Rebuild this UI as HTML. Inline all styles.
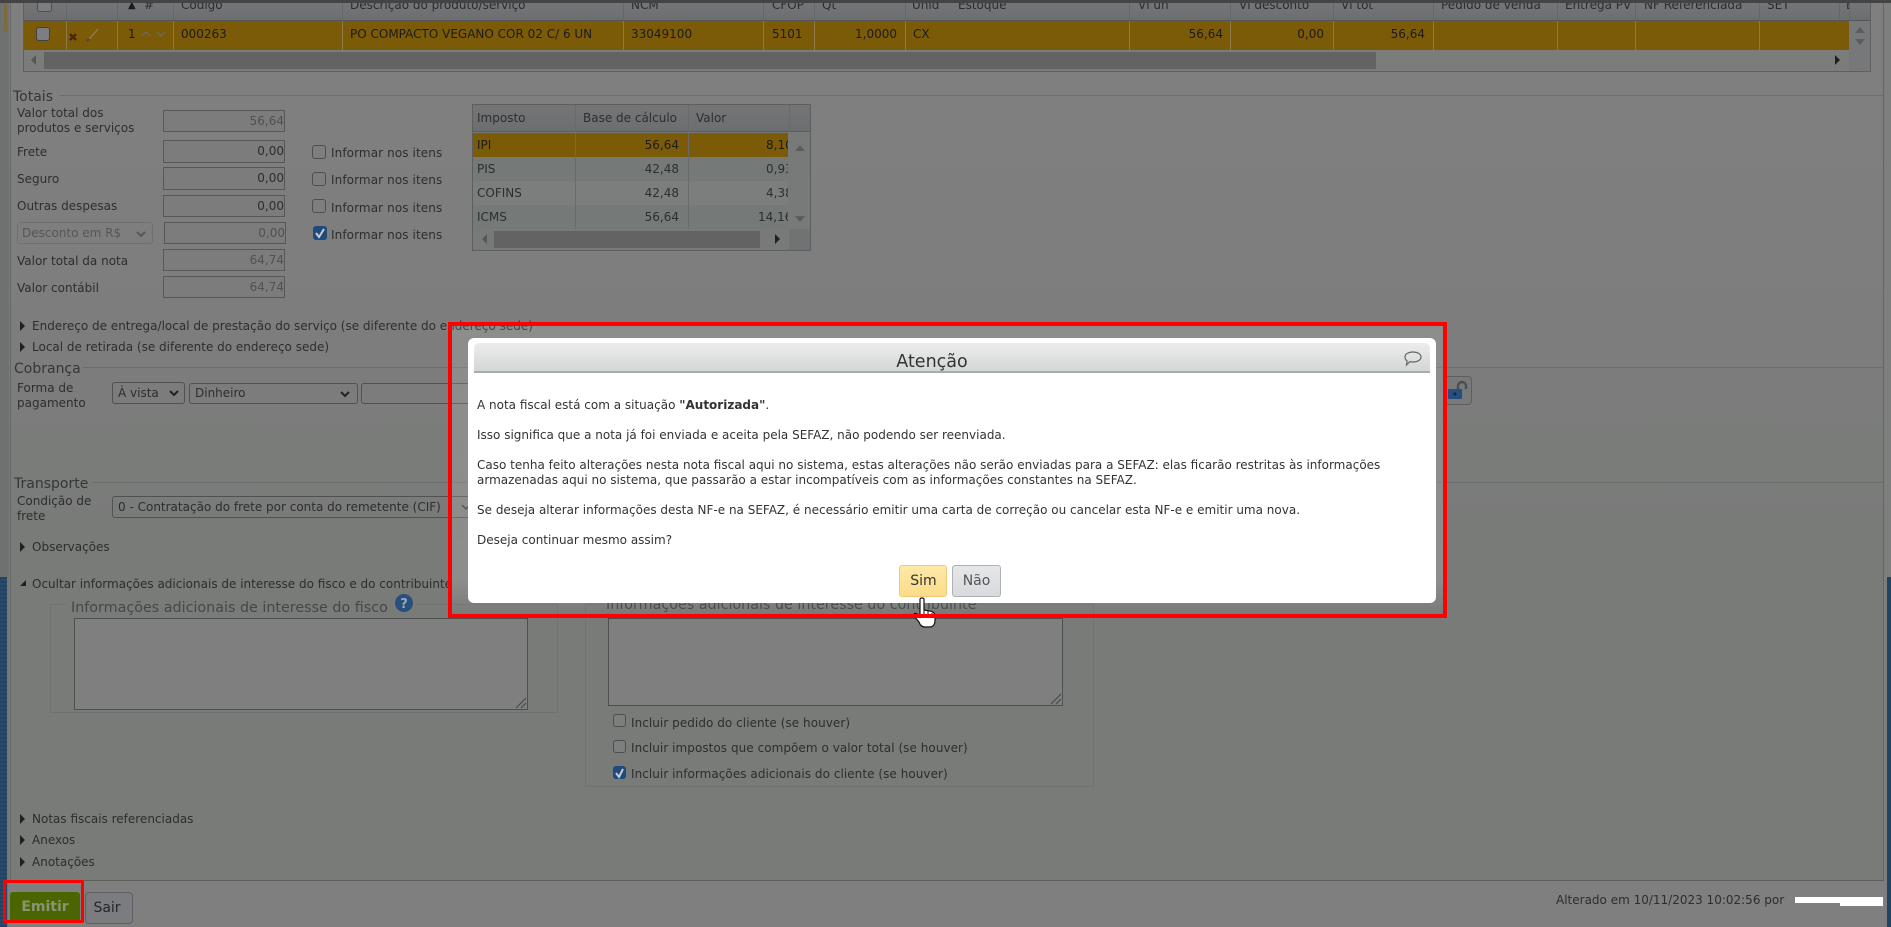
<!DOCTYPE html>
<html lang="pt-BR"><head><meta charset="utf-8"><title>Nota fiscal</title>
<style>
html,body{margin:0;padding:0}
body{width:1891px;height:927px;overflow:hidden;position:relative;background:#7b7c7b;font-family:"DejaVu Sans",Verdana,sans-serif;font-size:12px;color:#2c2e2f}
div{position:absolute;box-sizing:border-box}
.t{position:absolute;white-space:nowrap;line-height:14px;height:14px}
.lg{position:absolute;white-space:nowrap;font-size:14px;line-height:18px;color:#333738}
.hl{position:absolute;height:1px;background:#6c6e6e}
.vs{position:absolute;width:1px;background:#646668}
.gc{position:absolute;width:1px;background:#8d7a45}
.box{border:1px solid #565858;background:#7b7c7b;text-align:right;line-height:20px;padding-right:0;white-space:nowrap;overflow:hidden}
.cb{position:absolute;width:14px;height:14px;border:1px solid #4c4e50;border-radius:3px;background:#7d7f7f}
.cb.on{background:#1f4a7c;border-color:#1f4a7c;color:#c8cdd2}
.arr{position:absolute;width:0;height:0;border-top:5px solid transparent;border-bottom:5px solid transparent;border-left:5px solid #202020}
.hd{position:absolute;top:-2px;font-size:12px;line-height:14px;white-space:nowrap;color:#2a2c2e}
</style></head><body>

<!-- frame -->
<div style="left:0;top:3px;width:9px;height:574px;background:#6f7070"></div>
<div style="left:4px;top:3px;width:3px;height:28px;background:#7d6a3f"></div>
<div style="left:0;top:577px;width:9px;height:350px;background:#747575"></div>
<div style="left:0;top:577px;width:7px;height:350px;background:repeating-linear-gradient(0deg,#234363 0 2px,#2b4a6a 2px 4px)"></div>
<div style="left:1884px;top:3px;width:7px;height:924px;background:#7d7e7e"></div>
<div style="left:1887px;top:577px;width:4px;height:350px;background:#234363"></div>
<div style="left:10px;top:3px;width:1px;height:877px;background:#666868"></div>
<div style="left:1883px;top:3px;width:1px;height:877px;background:#646666"></div>
<div style="left:11px;top:3px;width:1872px;height:877px;background:linear-gradient(#7f7f7f,#7f7f7f 15%,#797b79 60%,#797b79)"></div>
<div style="left:10px;top:880px;width:1874px;height:1px;background:#5c5e5e"></div>
<div style="left:8px;top:881px;width:1876px;height:46px;background:#7f7f7f"></div>

<!-- product table -->
<div style="left:23px;top:3px;width:1848px;height:69px;border:1px solid #5e6062;border-top:0;background:#7b7d7b"></div>
<div style="left:24px;top:3px;width:1846px;height:17px;background:linear-gradient(#747577,#6c6e70)"></div>
<div style="left:24px;top:20px;width:1846px;height:1px;background:#55575a"></div>
<div style="left:24px;top:21px;width:1825px;height:29px;background:#7c5b08"></div>
<div style="left:37px;top:3px;width:15px;height:9px;border:1px solid #4d4f52;border-top:0;border-radius:0 0 3px 3px;background:#7b7d80"></div>
<span class="hd" style="left:128px;top:-1px;font-size:10px;color:#1a1a1a">▲</span><span class="hd" style="left:144px">#</span>
<span class="hd" style="left:181px">Código</span><span class="hd" style="left:350px">Descrição do produto/serviço</span><span class="hd" style="left:631px">NCM</span><span class="hd" style="left:772px">CFOP</span><span class="hd" style="left:822px">Qt</span><span class="hd" style="left:912px">Unid</span><span class="hd" style="left:958px">Estoque</span><span class="hd" style="left:1138px">Vl un</span><span class="hd" style="left:1239px">Vl desconto</span><span class="hd" style="left:1341px">Vl tot</span><span class="hd" style="left:1441px">Pedido de venda</span><span class="hd" style="left:1565px">Entrega PV</span><span class="hd" style="left:1644px">NF Referenciada</span><span class="hd" style="left:1767px">SET</span>
<div style="left:1846px;top:-2px;width:3px;height:14px;overflow:hidden;line-height:14px">E</div>
<div class="vs" style="left:66px;top:3px;height:17px"></div><div class="vs" style="left:117px;top:3px;height:17px"></div><div class="vs" style="left:173px;top:3px;height:17px"></div><div class="vs" style="left:342px;top:3px;height:17px"></div><div class="vs" style="left:623px;top:3px;height:17px"></div><div class="vs" style="left:763px;top:3px;height:17px"></div><div class="vs" style="left:814px;top:3px;height:17px"></div><div class="vs" style="left:905px;top:3px;height:17px"></div><div class="vs" style="left:1129px;top:3px;height:17px"></div><div class="vs" style="left:1230px;top:3px;height:17px"></div><div class="vs" style="left:1333px;top:3px;height:17px"></div><div class="vs" style="left:1433px;top:3px;height:17px"></div><div class="vs" style="left:1557px;top:3px;height:17px"></div><div class="vs" style="left:1635px;top:3px;height:17px"></div><div class="vs" style="left:1759px;top:3px;height:17px"></div><div class="vs" style="left:1839px;top:3px;height:17px"></div><div class="vs" style="left:1849px;top:3px;height:17px"></div>
<div class="gc" style="left:66px;top:21px;height:29px"></div><div class="gc" style="left:117px;top:21px;height:29px"></div><div class="gc" style="left:173px;top:21px;height:29px"></div><div class="gc" style="left:342px;top:21px;height:29px"></div><div class="gc" style="left:623px;top:21px;height:29px"></div><div class="gc" style="left:763px;top:21px;height:29px"></div><div class="gc" style="left:814px;top:21px;height:29px"></div><div class="gc" style="left:905px;top:21px;height:29px"></div><div class="gc" style="left:1129px;top:21px;height:29px"></div><div class="gc" style="left:1230px;top:21px;height:29px"></div><div class="gc" style="left:1333px;top:21px;height:29px"></div><div class="gc" style="left:1433px;top:21px;height:29px"></div><div class="gc" style="left:1557px;top:21px;height:29px"></div><div class="gc" style="left:1635px;top:21px;height:29px"></div><div class="gc" style="left:1759px;top:21px;height:29px"></div>
<div class="cb" style="left:36px;top:27px;background:#7c7e80;border:1px solid #3f4144"></div>
<svg style="position:absolute;left:68px;top:26px" width="34" height="18" viewBox="0 0 34 18"><path d="M2 8l6 6M8 8l-6 6" stroke="#4a2410" stroke-width="2.400"/><path d="M19 15l3-3 8-9" stroke="#8f8560" stroke-width="1" fill="none"/><path d="M19 15l2-2" stroke="#4a4030" stroke-width="2"/></svg>
<span class="t" style="left:128px;top:27px;color:#1c1c1c">1</span>
<svg style="position:absolute;left:140px;top:29px" width="28" height="10" viewBox="0 0 28 10"><path d="M2 7l4-4 4 4" stroke="#6b6a5c" fill="none" stroke-width="1.400"/><path d="M17 3l4 4 4-4" stroke="#6b6a5c" fill="none" stroke-width="1.400"/></svg>
<span class="t" style="left:181px;top:27px;color:#1c1c1c">000263</span>
<span class="t" style="left:350px;top:27px;color:#1c1c1c">PO COMPACTO VEGANO COR 02 C/ 6 UN</span>
<span class="t" style="left:631px;top:27px;color:#1c1c1c">33049100</span>
<span class="t" style="left:772px;top:27px;color:#1c1c1c">5101</span>
<span class="t" style="right:994px;top:27px;color:#1c1c1c">1,0000</span>
<span class="t" style="left:913px;top:27px;color:#1c1c1c">CX</span>
<span class="t" style="right:668px;top:27px;color:#1c1c1c">56,64</span>
<span class="t" style="right:567px;top:27px;color:#1c1c1c">0,00</span>
<span class="t" style="right:466px;top:27px;color:#1c1c1c">56,64</span>
<div style="left:44px;top:52px;width:1332px;height:17px;background:#636363"></div>
<div class="arr" style="left:31px;top:55px;border-left:0;border-right:5px solid #565656"></div>
<div class="arr" style="left:1835px;top:55px"></div>
<div style="left:1849px;top:21px;width:21px;height:50px;background:#76787a"></div>
<div style="left:1855px;top:27px;width:0;height:0;border-left:5px solid transparent;border-right:5px solid transparent;border-bottom:6px solid #5a5c5e"></div>
<div style="left:1855px;top:39px;width:0;height:0;border-left:5px solid transparent;border-right:5px solid transparent;border-top:6px solid #5a5c5e"></div>
<div style="left:0;top:0;width:1891px;height:3px;background:#444"></div>

<!-- Totais -->
<span class="lg" style="left:13px;top:88px">Totais</span>
<div class="hl" style="left:60px;top:95px;width:1823px"></div>
<span class="t" style="left:17px;top:106px">Valor total dos</span>
<span class="t" style="left:17px;top:121px">produtos e serviços</span>
<div class="box" style="left:163px;top:110px;width:122px;height:22px;color:#505252">56,64</div>
<span class="t" style="left:17px;top:145px">Frete</span>
<div class="box" style="left:163px;top:140px;width:122px;height:23px">0,00</div>
<span class="t" style="left:17px;top:172px">Seguro</span>
<div class="box" style="left:163px;top:167px;width:122px;height:23px">0,00</div>
<span class="t" style="left:17px;top:199px">Outras despesas</span>
<div class="box" style="left:163px;top:195px;width:122px;height:22px">0,00</div>
<div style="left:17px;top:222px;width:136px;height:22px;border:1px solid #6f7171;border-radius:3px;color:#555859;padding:3px 0 0 4px;line-height:14px">Desconto em R$</div>
<svg style="position:absolute;left:135px;top:230px" width="12" height="8" viewBox="0 0 12 8"><path d="M2 2l4 4 4-4" stroke="#555859" stroke-width="2" fill="none"/></svg>
<div class="box" style="left:164px;top:222px;width:122px;height:22px;color:#505252">0,00</div>
<span class="t" style="left:17px;top:254px">Valor total da nota</span>
<div class="box" style="left:163px;top:249px;width:122px;height:22px;color:#505252">64,74</div>
<span class="t" style="left:17px;top:281px">Valor contábil</span>
<div class="box" style="left:163px;top:276px;width:122px;height:22px;color:#505252">64,74</div>

<div class="cb" style="left:312px;top:145px"></div><span class="t" style="left:331px;top:146px;letter-spacing:.1px">Informar nos itens</span>
<div class="cb" style="left:312px;top:172px"></div><span class="t" style="left:331px;top:173px;letter-spacing:.1px">Informar nos itens</span>
<div class="cb" style="left:312px;top:199px"></div><span class="t" style="left:331px;top:201px;letter-spacing:.1px">Informar nos itens</span>
<div class="cb on" style="left:313px;top:226px"></div>
<svg style="position:absolute;left:313px;top:226px" width="14" height="14" viewBox="0 0 14 14"><path d="M3 7l3 4 5-8" stroke="#c6ccd2" stroke-width="2" fill="none"/></svg>
<span class="t" style="left:331px;top:228px;letter-spacing:.1px">Informar nos itens</span>

<!-- tax table -->
<div style="left:472px;top:104px;width:339px;height:147px;border:1px solid #5c5e60;background:#777a79;overflow:hidden">
 <div style="left:0;top:0;width:337px;height:27px;background:linear-gradient(#747577,#6c6e70);border-bottom:1px solid #5a5c60"></div>
 <div style="left:0;top:28px;width:315px;height:24px;background:#7c5b08"></div>
 <div style="left:0;top:52px;width:315px;height:24px;background:#757a78"></div>
 <div style="left:0;top:76px;width:315px;height:24px;background:#7b7e7c"></div>
 <div style="left:0;top:100px;width:315px;height:24px;background:#757a78"></div>
 <div style="left:102px;top:0;width:1px;height:124px;background:#686b6c"></div>
 <div style="left:215px;top:0;width:1px;height:124px;background:#686b6c"></div>
 <div style="left:316px;top:0;width:1px;height:28px;background:#686b6c"></div>
 <span class="t" style="left:4px;top:6px">Imposto</span><span class="t" style="left:110px;top:6px">Base de cálculo</span><span class="t" style="left:223px;top:6px">Valor</span>
 <span class="t" style="left:4px;top:33px;color:#1c1c1c">IPI</span><span class="t" style="right:131px;top:33px;color:#1c1c1c">56,64</span>
 <span class="t" style="left:4px;top:57px">PIS</span><span class="t" style="right:131px;top:57px">42,48</span>
 <span class="t" style="left:4px;top:81px">COFINS</span><span class="t" style="right:131px;top:81px">42,48</span>
 <span class="t" style="left:4px;top:105px">ICMS</span><span class="t" style="right:131px;top:105px">56,64</span>
 <div style="left:216px;top:28px;width:99px;height:96px;overflow:hidden">
  <span class="t" style="left:77px;top:5px;color:#1c1c1c">8,10</span>
  <span class="t" style="left:77px;top:29px">0,93</span>
  <span class="t" style="left:77px;top:53px">4,38</span>
  <span class="t" style="left:69px;top:77px">14,16</span>
 </div>
 <div style="left:21px;top:126px;width:266px;height:17px;background:#636363"></div>
 <div class="arr" style="left:9px;top:129px;border-left:0;border-right:5px solid #565656"></div>
 <div class="arr" style="left:302px;top:129px"></div>
 <div style="left:316px;top:124px;width:21px;height:21px;background:#707274"></div>
 <div style="left:322px;top:40px;width:0;height:0;border-left:5px solid transparent;border-right:5px solid transparent;border-bottom:6px solid #5a5c5e"></div>
 <div style="left:322px;top:111px;width:0;height:0;border-left:5px solid transparent;border-right:5px solid transparent;border-top:6px solid #5a5c5e"></div>
</div>

<!-- collapsibles -->
<div class="arr" style="left:20px;top:321px"></div><span class="t" style="left:32px;top:319px">Endereço de entrega/local de prestação do serviço (se diferente do endereço sede)</span>
<div class="arr" style="left:20px;top:342px"></div><span class="t" style="left:32px;top:340px">Local de retirada (se diferente do endereço sede)</span>

<span class="lg" style="left:14px;top:360px">Cobrança</span><div class="hl" style="left:83px;top:367px;width:1800px"></div>
<span class="t" style="left:17px;top:381px">Forma de</span><span class="t" style="left:17px;top:396px">pagamento</span>
<div style="left:112px;top:382px;width:73px;height:22px;border:1px solid #4f5152;border-radius:3px;padding:3px 0 0 5px;line-height:14px">À vista</div>
<svg style="position:absolute;left:167px;top:389px" width="14" height="8" viewBox="0 0 14 8"><path d="M3 2l4 4 4-4" stroke="#222" stroke-width="2" fill="none"/></svg>
<div style="left:189px;top:383px;width:169px;height:21px;border:1px solid #4f5152;border-radius:3px;padding:2px 0 0 5px;line-height:14px">Dinheiro</div>
<svg style="position:absolute;left:338px;top:390px" width="14" height="8" viewBox="0 0 14 8"><path d="M3 2l4 4 4-4" stroke="#222" stroke-width="2" fill="none"/></svg>
<div style="left:361px;top:383px;width:130px;height:21px;border:1px solid #4f5152;border-radius:3px"></div>

<span class="lg" style="left:14px;top:475px">Transporte</span><div class="hl" style="left:92px;top:482px;width:1791px"></div>
<span class="t" style="left:17px;top:494px">Condição de</span><span class="t" style="left:17px;top:509px">frete</span>
<div style="left:112px;top:496px;width:380px;height:22px;border:1px solid #4f5152;border-radius:3px;padding:3px 0 0 5px;line-height:14px;white-space:nowrap">0 - Contratação do frete por conta do remetente (CIF)</div>
<div class="arr" style="left:20px;top:542px"></div><span class="t" style="left:32px;top:540px">Observações</span>
<svg style="position:absolute;left:19px;top:579px" width="8" height="8" viewBox="0 0 8 8"><path d="M7 1v6H1z" fill="#202020"/></svg>
<span class="t" style="left:32px;top:577px">Ocultar informações adicionais de interesse do fisco e do contribuinte</span>

<!-- left fieldset -->
<div style="left:50px;top:604px;width:508px;height:109px;border:1px solid #6f7272;background:#797b79"></div>
<div style="left:66px;top:598px;width:350px;height:14px;background:#797b79"></div>
<span class="lg" style="left:71px;top:599px;font-size:14.3px;color:#44484a">Informações adicionais de interesse do fisco</span>
<svg style="position:absolute;left:394px;top:593px" width="20" height="20" viewBox="0 0 20 20"><circle cx="10" cy="10" r="9" fill="#28507c"/><text x="10" y="15" font-size="13" font-weight="bold" font-family="DejaVu Sans" text-anchor="middle" fill="#98a8b8">?</text></svg>
<div style="left:74px;top:618px;width:454px;height:92px;border:1px solid #4e5050;background:#7e7f7e"></div>
<svg style="position:absolute;left:514px;top:696px" width="13" height="13" viewBox="0 0 13 13"><path d="M2 12L12 2M7 12l5-5" stroke="#444" stroke-width="1"/></svg>

<!-- right fieldset -->
<div style="left:585px;top:604px;width:509px;height:183px;border:1px solid #6f7272;background:#797b79"></div>
<span class="lg" style="left:604px;top:596px;font-size:14.3px;background:#797b79;padding:0 2px;color:#44484a">Informações adicionais de interesse do contribuinte</span>
<div style="left:608px;top:618px;width:455px;height:88px;border:1px solid #4e5050;background:#7e7f7e"></div>
<svg style="position:absolute;left:1049px;top:692px" width="13" height="13" viewBox="0 0 13 13"><path d="M2 12L12 2M7 12l5-5" stroke="#444" stroke-width="1"/></svg>
<div class="cb" style="left:613px;top:714px;height:13px;width:13px"></div><span class="t" style="left:631px;top:716px;letter-spacing:.05px">Incluir pedido do cliente (se houver)</span>
<div class="cb" style="left:613px;top:740px;height:13px;width:13px"></div><span class="t" style="left:631px;top:741px;letter-spacing:.05px">Incluir impostos que compõem o valor total (se houver)</span>
<div class="cb on" style="left:613px;top:766px;height:13px;width:13px"></div>
<svg style="position:absolute;left:613px;top:766px" width="13" height="13" viewBox="0 0 13 13"><path d="M3 7l3 4 4-8" stroke="#c6ccd2" stroke-width="2" fill="none"/></svg>
<span class="t" style="left:631px;top:767px;letter-spacing:.05px">Incluir informações adicionais do cliente (se houver)</span>

<div class="arr" style="left:20px;top:814px"></div><span class="t" style="left:32px;top:812px">Notas fiscais referenciadas</span>
<div class="arr" style="left:20px;top:835px"></div><span class="t" style="left:32px;top:833px">Anexos</span>
<div class="arr" style="left:20px;top:857px"></div><span class="t" style="left:32px;top:855px">Anotações</span>

<!-- bottom -->
<div style="left:10px;top:892px;width:70px;height:30px;background:#4b6600;border-radius:3px;color:#8a9278;font-weight:bold;font-size:14px;line-height:30px;text-align:center">Emitir</div>
<div style="left:85px;top:892px;width:48px;height:32px;background:#7a7c80;border:1px solid #5e6064;border-radius:4px;color:#24262a;font-size:14px;line-height:30px;text-align:center;padding-right:4px">Sair</div>
<span class="t" style="left:1556px;top:893px">Alterado em 10/11/2023 10:02:56 por</span>
<div style="left:1795px;top:897px;width:88px;height:6px;background:#fff"></div>
<div style="left:1840px;top:902px;width:43px;height:4px;background:#fff"></div>
<div style="left:1443px;top:376px;width:29px;height:29px;border:1px solid #5c5e60;border-radius:4px;background:#787a7a"></div>
<svg style="position:absolute;left:1448px;top:378px" width="22" height="24" viewBox="0 0 22 24"><path d="M10 11V8a4 4 0 0 1 8 0v3" stroke="#4c4e50" stroke-width="2.400" fill="none"/><rect x="0" y="11" width="14" height="10" rx="1" fill="#264f80"/><circle cx="7" cy="16" r="1.500" fill="#10243e"/></svg>

<!-- Emit red frame -->
<div style="left:3px;top:880px;width:81px;height:43px;border:3px solid #ff0000;border-radius:2px"></div>

<!-- dialog -->
<div style="left:452px;top:326px;width:991px;height:288px;background:linear-gradient(rgba(255,255,255,.12),rgba(255,255,255,.14) 88%,rgba(255,255,255,0))"></div>
<svg style="position:absolute;left:461px;top:503px" width="10" height="8" viewBox="0 0 10 8"><path d="M1 2l4 4 4-4" stroke="#555" stroke-width="1.500" fill="none"/></svg>
<div style="left:468px;top:338px;width:968px;height:265px;background:#fff;border-radius:6px"></div>
<div style="left:474px;top:343px;width:956px;height:30px;background:linear-gradient(#ececec,#d4d7d7);border-bottom:2px solid #a9adad;border-radius:5px 5px 0 0"></div>
<span class="t" style="left:832px;top:351px;width:200px;height:22px;line-height:22px;text-align:center;font-size:17.5px;color:#333">Atenção</span>
<svg style="position:absolute;left:1403px;top:350px" width="20" height="18" viewBox="0 0 20 18"><path d="M10 2c4.500 0 8 2 8 5s-3.500 5-8 5c-1 0-2-.1-3-.4L3.500 15l.6-4C2.800 10 2 8.600 2 7c0-3 3.500-5 8-5z" fill="none" stroke="#666" stroke-width="1.200"/></svg>
<div style="left:477px;top:398px;width:950px;color:#333;line-height:15px;font-size:12px">
A nota fiscal está com a situação <b>"Autorizada"</b>.<br><br>
Isso significa que a nota já foi enviada e aceita pela SEFAZ, não podendo ser reenviada.<br><br>
Caso tenha feito alterações nesta nota fiscal aqui no sistema, estas alterações não serão enviadas para a SEFAZ: elas ficarão restritas às informações<br>armazenadas aqui no sistema, que passarão a estar incompatíveis com as informações constantes na SEFAZ.<br><br>
Se deseja alterar informações desta NF-e na SEFAZ, é necessário emitir uma carta de correção ou cancelar esta NF-e e emitir uma nova.<br><br>
Deseja continuar mesmo assim?
</div>
<div style="left:899px;top:565px;width:48px;height:32px;background:linear-gradient(#fde9a8,#fbdc8a);border:1px solid #f0c878;border-radius:3px;color:#333;font-size:14px;line-height:30px;text-align:center;padding-left:1px">Sim</div>
<div style="left:952px;top:565px;width:49px;height:32px;background:linear-gradient(#e6e7e9,#d8dadd);border:1px solid #aeb2b6;border-radius:3px;color:#555;font-size:14px;line-height:30px;text-align:center">Não</div>
<svg style="position:absolute;left:912px;top:597px" width="28" height="32" viewBox="0 0 28 32"><path d="M8 2c1-1.500 3-1.500 4 0v11l6 1c3 .6 5 2 5 5v5c0 3-2 6-5 6h-5c-3 0-5-2-6-5l-5-6c-1-2 1-3.500 3-2l3 3z" fill="#fff" stroke="#111" stroke-width="1.200"/><path d="M12 13v6M16 14v5M20 16v4" stroke="#111" stroke-width="1"/></svg>
<!-- red frame -->
<div style="left:448px;top:322px;width:999px;height:296px;border:4px solid #ff0000"></div>
</body></html>
